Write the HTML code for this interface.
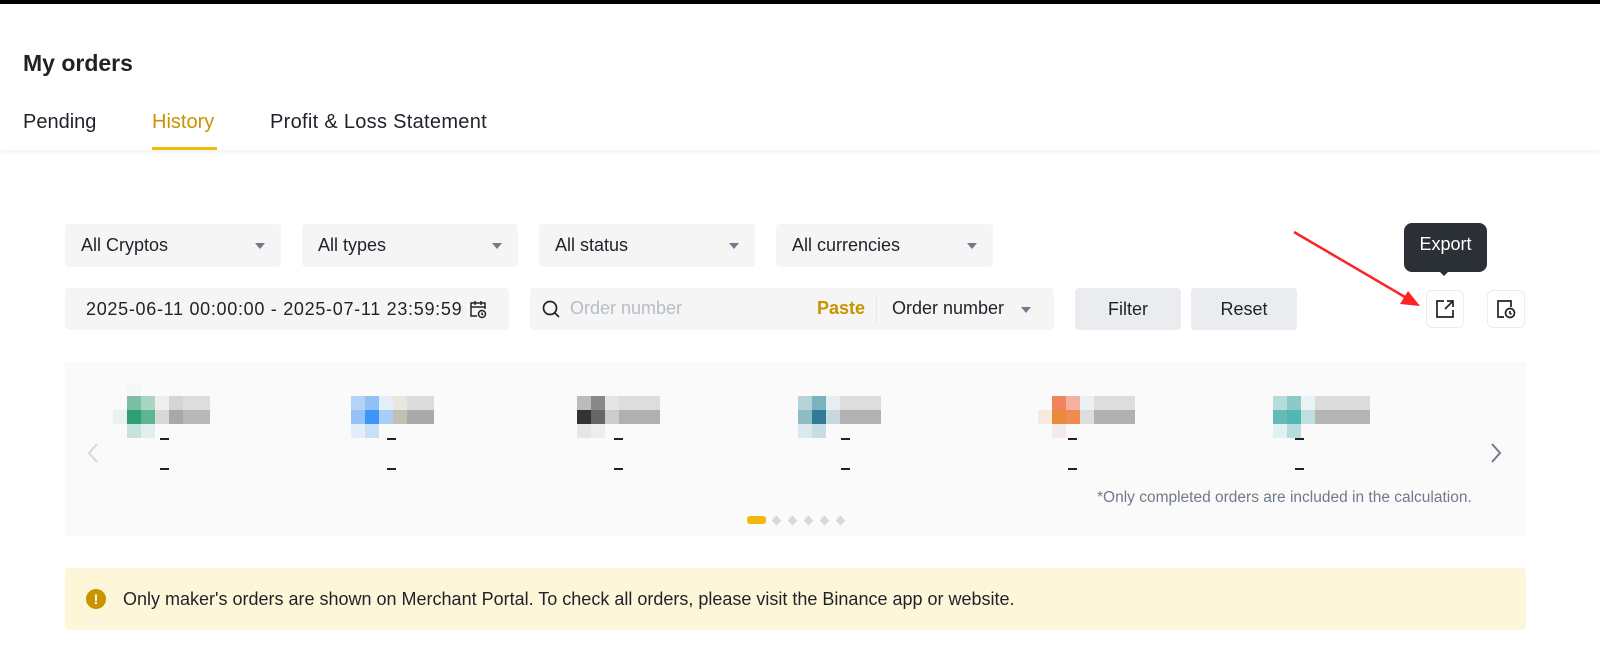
<!DOCTYPE html>
<html><head><meta charset="utf-8"><style>
*{box-sizing:border-box;margin:0;padding:0}
body{width:1600px;height:665px;background:#fff;font-family:"Liberation Sans",Arial,sans-serif;color:#1e2329;position:relative;overflow:hidden}
.a{position:absolute}
.sel{position:absolute;top:224px;height:43px;background:#f5f5f5;border-radius:4px;font-size:18px;line-height:43px;padding-left:16px}
.sel:after{content:"";position:absolute;right:16px;top:19px;border:5px solid transparent;border-top:6px solid #707a8a;border-bottom:0}
.btn{position:absolute;top:288px;height:42px;background:#eaecef;border-radius:4px;font-size:18px;line-height:42px;text-align:center}
.px{position:absolute;width:14px;height:14px}
.d{position:absolute;width:9px;height:2px;background:#1e2329}
.ib{position:absolute;top:290px;width:38px;height:38px;border:1px solid #eaecef;border-radius:6px;background:#fff}
</style></head><body>
<div class="a" style="left:0;top:0;width:1600px;height:4px;background:#000"></div>
<div class="a" style="left:0;top:4px;width:1600px;height:146px;box-shadow:0 2px 4px rgba(0,0,0,0.06)"></div>
<div class="a" style="left:23px;top:50px;font-size:23px;font-weight:bold">My orders</div>
<div class="a" style="left:23px;top:111px;font-size:20px">Pending</div>
<div class="a" style="left:152px;top:111px;font-size:20px;color:#c99400">History</div>
<div class="a" style="left:152px;top:147px;width:65px;height:3px;background:#f0b90b"></div>
<div class="a" style="left:270px;top:111px;font-size:20px;letter-spacing:0.3px">Profit &amp; Loss Statement</div>

<div class="sel" style="left:65px;width:216px">All Cryptos</div>
<div class="sel" style="left:302px;width:216px">All types</div>
<div class="sel" style="left:539px;width:216px">All status</div>
<div class="sel" style="left:776px;width:217px">All currencies</div>

<div class="a" style="left:65px;top:288px;width:444px;height:42px;background:#f5f5f5;border-radius:4px;font-size:18px;line-height:42px;padding-left:21px;letter-spacing:0.7px">2025-06-11 00:00:00 - 2025-07-11 23:59:59</div>
<svg class="a" style="left:468px;top:299px" width="20" height="20" viewBox="0 0 20 20" fill="none" stroke="#1e2329" stroke-width="1.5"><path d="M9 17H3V4h14v6M3 8h14M7 2v4M13 2v4"/><circle cx="14" cy="15" r="3.5"/><path d="M14 13.5v1.7l1 .8"/></svg>
<div class="a" style="left:530px;top:288px;width:524px;height:42px;background:#f5f5f5;border-radius:4px"></div>
<svg class="a" style="left:541px;top:299px" width="20" height="20" viewBox="0 0 20 20" fill="none" stroke="#1e2329" stroke-width="1.7"><circle cx="9" cy="9" r="6.5"/><path d="M14 14l4 4"/></svg>
<div class="a" style="left:570px;top:298px;font-size:18px;color:#b7bdc6">Order number</div>
<div class="a" style="left:817px;top:298px;font-size:18px;color:#c99400;font-weight:bold">Paste</div>
<div class="a" style="left:876px;top:294px;width:1px;height:30px;background:#e6e8ea"></div>
<div class="a" style="left:892px;top:298px;font-size:18px">Order number</div>
<div class="a" style="left:1021px;top:307px;border:5px solid transparent;border-top:6px solid #707a8a;border-bottom:0"></div>
<div class="btn" style="left:1075px;width:106px">Filter</div>
<div class="btn" style="left:1191px;width:106px">Reset</div>

<div class="a" style="left:1404px;top:223px;width:83px;height:49px;background:#2b2f36;border-radius:8px;color:#fff;font-size:18px;text-align:center;line-height:42px">Export</div>
<div class="a" style="left:1439px;top:271px;border:5px solid transparent;border-top:5px solid #2b2f36;border-bottom:0"></div>
<div class="ib" style="left:1426px"></div>
<svg class="a" style="left:1434px;top:298px" width="22" height="22" viewBox="0 0 22 22" fill="none" stroke="#1e2329" stroke-width="1.7"><path d="M10 3H3v16h16v-7M13 3h6v6M19 3l-8 8"/></svg>
<div class="ib" style="left:1487px"></div>
<svg class="a" style="left:1495px;top:298px" width="22" height="22" viewBox="0 0 22 22" fill="none" stroke="#1e2329" stroke-width="1.7"><path d="M9 19H3V3h13v6"/><circle cx="15" cy="15" r="4.5"/><path d="M15 13v2.3l1.5 1"/></svg>
<svg class="a" style="left:1290px;top:228px" width="140" height="85"><line x1="4" y1="4" x2="120" y2="72" stroke="#f22" stroke-width="2.5"/><polygon points="130,78 110,76 118,63" fill="#f22"/></svg>

<div class="a" style="left:65px;top:362px;width:1461px;height:174px;background:#fafafa"></div>
<svg class="a" style="left:86px;top:442px" width="14" height="22"><path d="M11 2L3 11l8 9" fill="none" stroke="#d5d8dc" stroke-width="2"/></svg>
<svg class="a" style="left:1489px;top:442px" width="14" height="22"><path d="M3 2l8 9-8 9" fill="none" stroke="#707a8a" stroke-width="2"/></svg>
<div class="a" style="left:1097px;top:489px;font-size:15.5px;color:#707a8a">*Only completed orders are included in the calculation.</div>
<div class="a" style="left:747px;top:516px;width:19px;height:8px;background:#f0b90b;border-radius:3px"></div>
<div class="a" style="left:773px;top:517px;width:7px;height:7px;background:#d5d8dc;transform:rotate(45deg)"></div>
<div class="a" style="left:789px;top:517px;width:7px;height:7px;background:#d5d8dc;transform:rotate(45deg)"></div>
<div class="a" style="left:805px;top:517px;width:7px;height:7px;background:#d5d8dc;transform:rotate(45deg)"></div>
<div class="a" style="left:821px;top:517px;width:7px;height:7px;background:#d5d8dc;transform:rotate(45deg)"></div>
<div class="a" style="left:837px;top:517px;width:7px;height:7px;background:#d5d8dc;transform:rotate(45deg)"></div>

<div class="a" style="left:65px;top:568px;width:1461px;height:62px;background:#fef6d8;border-radius:4px"></div>
<div class="a" style="left:86px;top:589px;width:20px;height:20px;border-radius:50%;background:#c99400;color:#fff;font-size:14px;font-weight:bold;text-align:center;line-height:20px">!</div>
<div class="a" style="left:123px;top:589px;font-size:18px">Only maker's orders are shown on Merchant Portal. To check all orders, please visit the Binance app or website.</div>

<div class="a" style="left:0;top:0">
<div class="px" style="left:127px;top:383px;background:#f6f6f6"></div>
<div class="px" style="left:127px;top:396px;background:#7cbfa5"></div><div class="px" style="left:141px;top:396px;background:#a8d6c4"></div><div class="px" style="left:155px;top:396px;background:#eee"></div><div class="px" style="left:169px;top:396px;background:#d5d5d5"></div><div class="px" style="left:183px;top:396px;width:27px;background:#ddd"></div>
<div class="px" style="left:113px;top:410px;background:#e8f2ef"></div><div class="px" style="left:127px;top:410px;background:#2e9e74"></div><div class="px" style="left:141px;top:410px;background:#5db592"></div><div class="px" style="left:155px;top:410px;background:#d8d8d8"></div><div class="px" style="left:169px;top:410px;background:#a8a8a8"></div><div class="px" style="left:183px;top:410px;width:27px;background:#b8b8b8"></div>
<div class="px" style="left:127px;top:424px;background:#c8e2dc"></div><div class="px" style="left:141px;top:424px;background:#e0efeb"></div>

<div class="px" style="left:351px;top:396px;background:#b5d3f7"></div><div class="px" style="left:365px;top:396px;background:#92c0f8"></div><div class="px" style="left:379px;top:396px;background:#e3eef8"></div><div class="px" style="left:393px;top:396px;background:#e8e6e0"></div><div class="px" style="left:407px;top:396px;width:27px;background:#dcdcdc"></div>
<div class="px" style="left:351px;top:410px;background:#95c2f6"></div><div class="px" style="left:365px;top:410px;background:#3c95f7"></div><div class="px" style="left:379px;top:410px;background:#a8cdf6"></div><div class="px" style="left:393px;top:410px;background:#c3c0b3"></div><div class="px" style="left:407px;top:410px;width:27px;background:#aaa"></div>
<div class="px" style="left:351px;top:424px;background:#e2edf8"></div><div class="px" style="left:365px;top:424px;background:#c8defa"></div>

<div class="px" style="left:577px;top:396px;background:#bbb"></div><div class="px" style="left:591px;top:396px;background:#888"></div><div class="px" style="left:605px;top:396px;background:#e5e5e5"></div><div class="px" style="left:619px;top:396px;width:41px;background:#ddd"></div>
<div class="px" style="left:577px;top:410px;background:#333"></div><div class="px" style="left:591px;top:410px;background:#666"></div><div class="px" style="left:605px;top:410px;background:#ccc"></div><div class="px" style="left:619px;top:410px;width:41px;background:#b0b0b0"></div>
<div class="px" style="left:577px;top:424px;background:#e6e6e6"></div><div class="px" style="left:591px;top:424px;background:#eee"></div>

<div class="px" style="left:798px;top:396px;background:#b4d4d8"></div><div class="px" style="left:812px;top:396px;background:#79b3c0"></div><div class="px" style="left:826px;top:396px;background:#e6eef0"></div><div class="px" style="left:840px;top:396px;width:41px;background:#ddd"></div>
<div class="px" style="left:798px;top:410px;background:#8cbcc4"></div><div class="px" style="left:812px;top:410px;background:#2f7a96"></div><div class="px" style="left:826px;top:410px;background:#c7d9dd"></div><div class="px" style="left:840px;top:410px;width:41px;background:#b2b2b2"></div>
<div class="px" style="left:798px;top:424px;background:#dbe9ec"></div><div class="px" style="left:812px;top:424px;background:#c6dde2"></div>

<div class="px" style="left:1052px;top:396px;background:#f0845e"></div><div class="px" style="left:1066px;top:396px;background:#f5b0a0"></div><div class="px" style="left:1080px;top:396px;background:#eaf0f3"></div><div class="px" style="left:1094px;top:396px;width:41px;background:#ddd"></div>
<div class="px" style="left:1038px;top:410px;background:#f7e9dc"></div><div class="px" style="left:1052px;top:410px;background:#ea8a3c"></div><div class="px" style="left:1066px;top:410px;background:#f08a55"></div><div class="px" style="left:1080px;top:410px;background:#ddd"></div><div class="px" style="left:1094px;top:410px;width:41px;background:#b0b0b0"></div>
<div class="px" style="left:1052px;top:424px;background:#f4eaea"></div>

<div class="px" style="left:1273px;top:396px;background:#b8dcdc"></div><div class="px" style="left:1287px;top:396px;background:#8ccac8"></div><div class="px" style="left:1301px;top:396px;background:#eaf2f4"></div><div class="px" style="left:1315px;top:396px;width:55px;background:#dcdcdc"></div>
<div class="px" style="left:1273px;top:410px;background:#64bab4"></div><div class="px" style="left:1287px;top:410px;background:#4fb8b2"></div><div class="px" style="left:1301px;top:410px;background:#bfdfe0"></div><div class="px" style="left:1315px;top:410px;width:55px;background:#b5b5b5"></div>
<div class="px" style="left:1273px;top:424px;background:#e3f0f2"></div><div class="px" style="left:1287px;top:424px;background:#b6dcdc"></div>
</div>
<div class="d" style="left:160px;top:438px"></div><div class="d" style="left:160px;top:468px"></div>
<div class="d" style="left:387px;top:438px"></div><div class="d" style="left:387px;top:468px"></div>
<div class="d" style="left:614px;top:438px"></div><div class="d" style="left:614px;top:468px"></div>
<div class="d" style="left:841px;top:438px"></div><div class="d" style="left:841px;top:468px"></div>
<div class="d" style="left:1068px;top:438px"></div><div class="d" style="left:1068px;top:468px"></div>
<div class="d" style="left:1295px;top:438px"></div><div class="d" style="left:1295px;top:468px"></div>
</body></html>
